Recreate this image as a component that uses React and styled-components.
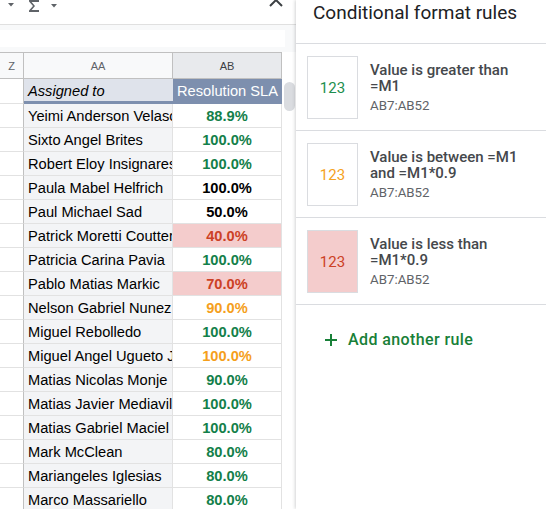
import React from 'react';
import styled, { createGlobalStyle } from 'styled-components';

const GlobalStyle = createGlobalStyle`
  html, body {
    margin: 0;
    padding: 0;
    background: #fff;
  }
`;

const Page = styled.div`
  display: flex;
  width: 546px;
  height: 509px;
  overflow: hidden;
  background: #fff;
`;

// Spreadsheet side
const Sheet = styled.div`
  width: 296px;
  flex-shrink: 0;
  display: flex;
  flex-direction: column;
  overflow: hidden;
`;

const Toolbar = styled.div`
  height: 25px;
  border-bottom: 1px solid #e0e0e0;
  display: flex;
  align-items: flex-start;
  padding-left: 8px;
  padding-right: 13px;
  box-sizing: border-box;
  flex-shrink: 0;
`;

const ToolIcon = styled.div`
  display: flex;
  margin-left: ${p => p.gap || 0}px;
  margin-top: ${p => p.top || 0}px;
`;

const Spacer = styled.div`
  flex: 1;
`;

const FormulaBar = styled.div`
  height: 27px;
  background: #f8f9fa;
  display: flex;
  align-items: center;
  padding-right: 11px;
  flex-shrink: 0;
`;

const FormulaInput = styled.div`
  flex: 1;
  height: 17px;
  background: #fff;
`;

const GridArea = styled.div`
  display: flex;
  flex: 1;
`;

const Table = styled.div`
  width: 282px;
  display: grid;
  grid-template-columns: 24px 149px 109px;
  grid-template-rows: 27px 25px;
  grid-auto-rows: 24px;
  align-content: start;
  font-family: "Liberation Sans", Arial, sans-serif;
`;

const ColHead = styled.div`
  box-sizing: border-box;
  border-top: 1px solid #c0c0c0;
  border-bottom: 1px solid #c0c0c0;
  border-right: 1px solid #c0c0c0;
  background: ${p => (p.selected ? '#e8eaed' : '#f8f9fa')};
  color: ${p => (p.selected ? '#3c4043' : '#5f6368')};
  font-size: 11px;
  display: flex;
  align-items: center;
  justify-content: center;
`;

const HeadCell = styled.div`
  box-sizing: border-box;
  border-bottom: 3px solid ${p => (p.blank ? '#e2e2e2' : '#7d8fae')};
  ${p => p.blank && 'border-bottom-width: 1px; border-right: 1px solid #c0c0c0;'}
  background: ${p => p.bg};
  color: ${p => p.color || '#000'};
  font-size: 14.67px;
  font-style: ${p => (p.italic ? 'italic' : 'normal')};
  padding: 2px 4px 0;
  display: flex;
  align-items: center;
  justify-content: ${p => (p.center ? 'center' : 'flex-start')};
  white-space: nowrap;
  overflow: hidden;
`;

const Cell = styled.div`
  box-sizing: border-box;
  border-bottom: 1px solid #e2e2e2;
  border-right: 1px solid ${p => (p.edge ? '#c0c0c0' : '#e2e2e2')};
  background: ${p => p.bg || '#fff'};
  color: ${p => p.color || '#000'};
  font-size: 14.67px;
  font-weight: ${p => (p.bold ? 700 : 400)};
  padding: 0 4px;
  display: flex;
  align-items: center;
  justify-content: ${p => (p.center ? 'center' : 'flex-start')};
  white-space: nowrap;
  overflow: hidden;
`;

const ScrollTrack = styled.div`
  width: 14px;
  display: flex;
  flex-direction: column;
  align-items: center;
  padding-top: 30px;
  box-sizing: border-box;
`;

const ScrollThumb = styled.div`
  width: 11px;
  height: 29px;
  border-radius: 6px;
  background: #dadce0;
`;

// Conditional format side panel
const Panel = styled.div`
  flex: 1;
  position: relative;
  z-index: 1;
  background: #fff;
  box-shadow: -1px 0 3px rgba(60, 64, 67, 0.22);
  font-family: Roboto, "Noto Sans", sans-serif;
  display: flex;
  flex-direction: column;
`;

const PanelTitle = styled.div`
  height: 44px;
  box-sizing: border-box;
  padding: 1px 0 0 17px;
  font-size: 19px;
  color: #202124;
  border-bottom: 1px solid #dadce0;
`;

const RuleCard = styled.div`
  display: flex;
  align-items: center;
  gap: 12px;
  padding: 12px 0 11px 11px;
  border-bottom: 1px solid #dadce0;
`;

const Preview = styled.div`
  width: 51px;
  height: 63px;
  flex-shrink: 0;
  box-sizing: border-box;
  border: 1px solid #dadce0;
  background: ${p => p.bg || '#fff'};
  color: ${p => p.color};
  font-size: 15px;
  display: flex;
  align-items: center;
  justify-content: center;
`;

const RuleText = styled.div`
  max-width: 166px;
  display: flex;
  flex-direction: column;
`;

const RuleTitle = styled.div`
  font-size: 15px;
  font-weight: 500;
  line-height: 16px;
  color: #45484c;
`;

const RuleRange = styled.div`
  font-size: 13.3px;
  line-height: 16px;
  margin-top: 4px;
  color: #5f6368;
`;

const AddRule = styled.div`
  display: flex;
  align-items: center;
  gap: 11px;
  padding: 25px 0 0 29px;
  color: #188038;
  font-size: 16px;
  font-weight: 500;
  letter-spacing: 0.4px;
`;

const rows = [
  ['Yeimi Anderson Velasco', '88.9%', 'green'],
  ['Sixto Angel Brites', '100.0%', 'green'],
  ['Robert Eloy Insignares', '100.0%', 'green'],
  ['Paula Mabel Helfrich', '100.0%', 'black'],
  ['Paul Michael Sad', '50.0%', 'black'],
  ['Patrick Moretti Coutterot', '40.0%', 'red'],
  ['Patricia Carina Pavia', '100.0%', 'green'],
  ['Pablo Matias Markic', '70.0%', 'red'],
  ['Nelson Gabriel Nunez', '90.0%', 'orange'],
  ['Miguel Rebolledo', '100.0%', 'green'],
  ['Miguel Angel Ugueto Jimenez', '100.0%', 'orange'],
  ['Matias Nicolas Monje', '90.0%', 'green'],
  ['Matias Javier Mediavilla', '100.0%', 'green'],
  ['Matias Gabriel Maciel', '100.0%', 'green'],
  ['Mark McClean', '80.0%', 'green'],
  ['Mariangeles Iglesias', '80.0%', 'green'],
  ['Marco Massariello', '80.0%', 'green'],
];

const tones = {
  green: { color: '#13804a' },
  black: { color: '#000' },
  red: { color: '#cc4125', bg: '#f4cccc' },
  orange: { color: '#f59f1c' },
};

const rules = [
  { title: 'Value is greater than =M1', color: '#1e8e4e' },
  { title: 'Value is between =M1 and =M1*0.9', color: '#f5a21e' },
  { title: 'Value is less than =M1*0.9', color: '#cc4125', bg: '#f4cccc' },
];

const Caret = () => (
  <svg width="6" height="4" viewBox="0 0 6 4">
    <path d="M0 0h6L3 3.5z" fill="#5f6368" />
  </svg>
);

const Sigma = () => (
  <svg width="12" height="12" viewBox="0 0 12 12">
    <path d="M1 0h10v2H3.6l3.4 4-3.4 4H11v2H1v-1.6L5 6 1 1.6z" fill="#5f6368" />
  </svg>
);

const Chevron = () => (
  <svg width="14" height="9" viewBox="0 0 14 9">
    <path d="M1 8l6-6 6 6" fill="none" stroke="#3c4043" strokeWidth="2" />
  </svg>
);

const App = () => (
  <Page>
    <GlobalStyle />
    <Sheet>
      <Toolbar>
        <ToolIcon top={3}><Caret /></ToolIcon>
        <ToolIcon gap={14} top={0}><Sigma /></ToolIcon>
        <ToolIcon gap={11} top={4}><Caret /></ToolIcon>
        <Spacer />
        <ToolIcon top={-2}><Chevron /></ToolIcon>
      </Toolbar>
      <FormulaBar>
        <FormulaInput />
      </FormulaBar>
      <GridArea>
        <Table>
          <ColHead>Z</ColHead>
          <ColHead>AA</ColHead>
          <ColHead selected>AB</ColHead>

          <HeadCell blank bg="#fff" />
          <HeadCell bg="#dfe3eb" italic>Assigned to</HeadCell>
          <HeadCell bg="#7d8fae" color="#fff" center>Resolution SLA</HeadCell>

          {rows.map(([name, value, tone]) => (
            <React.Fragment key={name}>
              <Cell edge />
              <Cell bg="#f3f4f6">{name}</Cell>
              <Cell center bold color={tones[tone].color} bg={tones[tone].bg}>
                {value}
              </Cell>
            </React.Fragment>
          ))}
        </Table>
        <ScrollTrack>
          <ScrollThumb />
        </ScrollTrack>
      </GridArea>
    </Sheet>

    <Panel>
      <PanelTitle>Conditional format rules</PanelTitle>
      {rules.map(rule => (
        <RuleCard key={rule.title}>
          <Preview color={rule.color} bg={rule.bg}>123</Preview>
          <RuleText>
            <RuleTitle>{rule.title}</RuleTitle>
            <RuleRange>AB7:AB52</RuleRange>
          </RuleText>
        </RuleCard>
      ))}
      <AddRule>
        <svg width="12" height="12" viewBox="0 0 12 12">
          <path d="M6 0v12M0 6h12" stroke="#188038" strokeWidth="2" />
        </svg>
        Add another rule
      </AddRule>
    </Panel>
  </Page>
);

export default App;
